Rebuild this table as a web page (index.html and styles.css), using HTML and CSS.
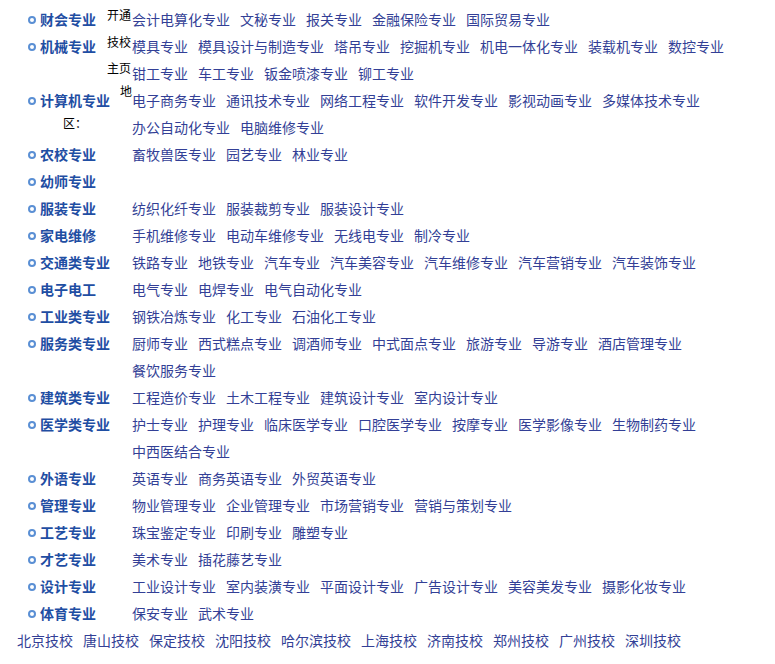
FILE: index.html
```html
<!DOCTYPE html>
<html lang="zh">
<head>
<meta charset="utf-8">
<title>专业</title>
<link rel="stylesheet" href="styles.css">
</head>
<body>
<div class="page">
  <div class="float-note">
    <span class="fn fn1">开通</span>
    <span class="fn fn2">技校</span>
    <span class="fn fn3">主页</span>
    <span class="fn fn4">地</span>
    <span class="fn fn5">区：</span>
  </div>
  <ul class="cats">
    <li class="row"><span class="cat">财会专业</span><div class="links"><a>会计电算化专业</a><a>文秘专业</a><a>报关专业</a><a>金融保险专业</a><a>国际贸易专业</a></div></li>
    <li class="row"><span class="cat">机械专业</span><div class="links"><a>模具专业</a><a>模具设计与制造专业</a><a>塔吊专业</a><a>挖掘机专业</a><a>机电一体化专业</a><a>装载机专业</a><a>数控专业</a><a>钳工专业</a><a>车工专业</a><a>钣金喷漆专业</a><a>铆工专业</a></div></li>
    <li class="row"><span class="cat">计算机专业</span><div class="links"><a>电子商务专业</a><a>通讯技术专业</a><a>网络工程专业</a><a>软件开发专业</a><a>影视动画专业</a><a>多媒体技术专业</a><a>办公自动化专业</a><a>电脑维修专业</a></div></li>
    <li class="row"><span class="cat">农校专业</span><div class="links"><a>畜牧兽医专业</a><a>园艺专业</a><a>林业专业</a></div></li>
    <li class="row"><span class="cat">幼师专业</span><div class="links"></div></li>
    <li class="row"><span class="cat">服装专业</span><div class="links"><a>纺织化纤专业</a><a>服装裁剪专业</a><a>服装设计专业</a></div></li>
    <li class="row"><span class="cat">家电维修</span><div class="links"><a>手机维修专业</a><a>电动车维修专业</a><a>无线电专业</a><a>制冷专业</a></div></li>
    <li class="row"><span class="cat">交通类专业</span><div class="links"><a>铁路专业</a><a>地铁专业</a><a>汽车专业</a><a>汽车美容专业</a><a>汽车维修专业</a><a>汽车营销专业</a><a>汽车装饰专业</a></div></li>
    <li class="row"><span class="cat">电子电工</span><div class="links"><a>电气专业</a><a>电焊专业</a><a>电气自动化专业</a></div></li>
    <li class="row"><span class="cat">工业类专业</span><div class="links"><a>钢铁冶炼专业</a><a>化工专业</a><a>石油化工专业</a></div></li>
    <li class="row"><span class="cat">服务类专业</span><div class="links"><a>厨师专业</a><a>西式糕点专业</a><a>调酒师专业</a><a>中式面点专业</a><a>旅游专业</a><a>导游专业</a><a>酒店管理专业</a><a>餐饮服务专业</a></div></li>
    <li class="row"><span class="cat">建筑类专业</span><div class="links"><a>工程造价专业</a><a>土木工程专业</a><a>建筑设计专业</a><a>室内设计专业</a></div></li>
    <li class="row"><span class="cat">医学类专业</span><div class="links"><a>护士专业</a><a>护理专业</a><a>临床医学专业</a><a>口腔医学专业</a><a>按摩专业</a><a>医学影像专业</a><a>生物制药专业</a><a>中西医结合专业</a></div></li>
    <li class="row"><span class="cat">外语专业</span><div class="links"><a>英语专业</a><a>商务英语专业</a><a>外贸英语专业</a></div></li>
    <li class="row"><span class="cat">管理专业</span><div class="links"><a>物业管理专业</a><a>企业管理专业</a><a>市场营销专业</a><a>营销与策划专业</a></div></li>
    <li class="row"><span class="cat">工艺专业</span><div class="links"><a>珠宝鉴定专业</a><a>印刷专业</a><a>雕塑专业</a></div></li>
    <li class="row"><span class="cat">才艺专业</span><div class="links"><a>美术专业</a><a>插花藤艺专业</a></div></li>
    <li class="row"><span class="cat">设计专业</span><div class="links"><a>工业设计专业</a><a>室内装潢专业</a><a>平面设计专业</a><a>广告设计专业</a><a>美容美发专业</a><a>摄影化妆专业</a></div></li>
    <li class="row"><span class="cat">体育专业</span><div class="links"><a>保安专业</a><a>武术专业</a></div></li>
  </ul>
  <div class="cities">
    <a>北京技校</a><a>唐山技校</a><a>保定技校</a><a>沈阳技校</a><a>哈尔滨技校</a><a>上海技校</a><a>济南技校</a><a>郑州技校</a><a>广州技校</a><a>深圳技校</a>
  </div>
</div>
</body>
</html>
```

FILE: styles.css
```css
html, body {
  margin: 0;
  padding: 0;
  background: #ffffff;
}
body {
  font-family: "Noto Sans CJK SC", "Microsoft YaHei", sans-serif;
  font-size: 14px;
}
.page {
  position: relative;
  padding: 6px 0 0 17px;
  width: 745px;
}
.float-note {
  position: absolute;
  left: 0;
  top: 0;
  width: 0;
  height: 0;
}
.fn {
  position: absolute;
  font-size: 12px;
  line-height: 12px;
  color: #000;
  white-space: nowrap;
}
.fn1 { left: 107px; top: 9px; }
.fn2 { left: 107px; top: 36px; }
.fn3 { left: 107px; top: 62px; }
.fn4 { left: 120px; top: 85px; }
.fn5 { left: 63px; top: 117px; }
.cats {
  list-style: none;
  margin: 0;
  padding: 0 0 0 10px;
}
.row {
  display: flex;
  align-items: flex-start;
  line-height: 27px;
}
.cat {
  flex: 0 0 auto;
  width: 92px;
  padding-left: 13px;
  position: relative;
  font-weight: bold;
  color: #1f4ea3;
}
.cat::before {
  content: "";
  position: absolute;
  left: 1px;
  top: 9.5px;
  width: 4px;
  height: 4px;
  border: 2px solid #5a8fd4;
  border-radius: 50%;
}
.links {
  display: flex;
  flex-wrap: wrap;
  column-gap: 10px;
  width: 628px;
  min-height: 27px;
}
.links a, .cities a {
  color: #333f96;
  text-decoration: none;
  white-space: nowrap;
}
.cities {
  display: flex;
  column-gap: 10px;
  line-height: 27px;
}
```
